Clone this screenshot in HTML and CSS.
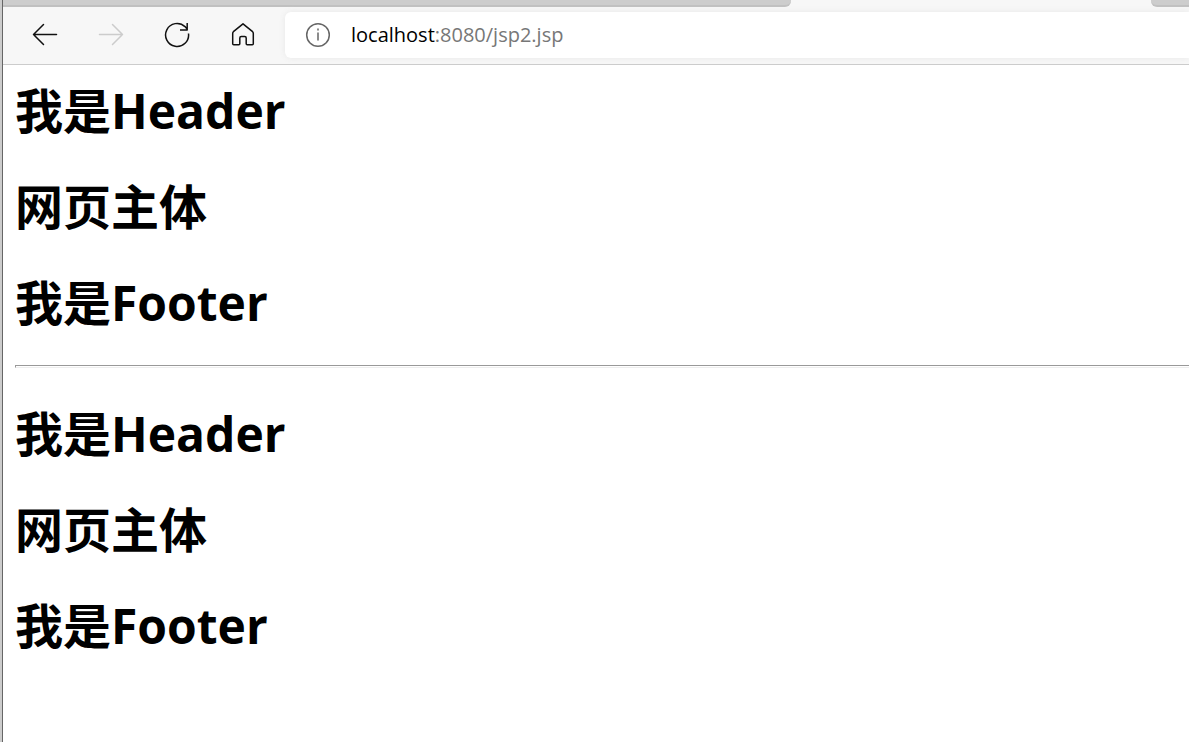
FILE: index.html
```html
<!DOCTYPE html>
<html lang="zh-CN">
<head>
<meta charset="utf-8">
<title>localhost:8080/jsp2.jsp</title>
<link rel="stylesheet" href="styles.css">
</head>
<body>
<div class="window">
  <div class="tabstrip">
    <div class="tabs-before"></div>
    <div class="tab-active"></div>
    <div class="tabs-after"></div>
  </div>
  <header class="toolbar">
    <nav class="nav">
      <button class="nav-button" type="button" aria-label="Back">
        <svg class="icon" viewBox="0 0 26 26"><path d="M24.500 12.500H1.500M11.500 2.500L1.500 12.500L11.500 22.500"/></svg>
      </button>
      <button class="nav-button" type="button" aria-label="Forward" disabled>
        <svg class="icon" viewBox="0 0 26 26"><path d="M1.500 12.500H24.500M14.500 2.500L24.500 12.500L14.500 22.500"/></svg>
      </button>
      <button class="nav-button" type="button" aria-label="Refresh">
        <svg class="icon" viewBox="0 0 26 26"><path stroke-linecap="butt" d="M24.500 11.500A11.500 11.500 0 1 1 21 4.600L23.500 7.500M23.200 1V8H16"/></svg>
      </button>
      <button class="nav-button" type="button" aria-label="Home">
        <svg class="icon" viewBox="0 0 26 26"><path d="M13 1.800L22.600 9.700Q23.300 10.400 23.300 11.500V21.700Q23.300 22.700 22.300 22.700H17.200Q16.200 22.700 16.200 21.700V16Q16.200 14.500 14.700 14.500H11.300Q9.800 14.500 9.800 16V21.700Q9.800 22.700 8.800 22.700H3.700Q2.700 22.700 2.700 21.700V11.500Q2.700 10.400 3.400 9.700Z"/></svg>
      </button>
    </nav>
    <div class="address">
      <button class="info" type="button" aria-label="Site information">
        <svg class="icon" viewBox="0 0 26 26"><circle cx="13" cy="13" r="11.300"/><path d="M13 11V18M13 7V8"/></svg>
      </button>
      <div class="url" role="textbox" aria-label="Address" contenteditable="true" spellcheck="false"><span class="host">localhost</span>:8080/jsp2.jsp</div>
    </div>
  </header>
  <main class="page">
    <h1>我是Header</h1>
    <h1>网页主体</h1>
    <h1>我是Footer</h1>
    <hr>
    <h1>我是Header</h1>
    <h1>网页主体</h1>
    <h1>我是Footer</h1>
  </main>
</div>
</body>
</html>
```

FILE: styles.css
```css
* {
  box-sizing: border-box;
}

body {
  margin: 0;
  background: #ccc;
  font-family: "Open Sans", "Noto Sans CJK SC", sans-serif;
}

.window {
  min-height: 100vh;
  margin-left: 2px;
  border-left: 1px solid #666;
  background: #fff;
  overflow: hidden;
}

.tabstrip {
  display: flex;
  height: 7px;
  background: #f7f7f7;
}

.tabs-before {
  flex: 788;
  border-bottom: 2px solid #c0c0c0;
  border-bottom-right-radius: 6px;
  background: #cdcdcd;
}

.tab-active {
  flex: 360;
}

.tabs-after {
  flex: 38;
  border-bottom: 2px solid #c0c0c0;
  border-bottom-left-radius: 6px;
  background: #cdcdcd;
}

.toolbar {
  display: flex;
  align-items: center;
  height: 58px;
  padding-bottom: 1px;
  border-bottom: 1px solid #ccc;
  background: #f7f7f7;
}

.nav {
  display: flex;
  padding: 0 9px;
}

.nav-button,
.info {
  display: flex;
  align-items: center;
  justify-content: center;
  padding: 0;
  border: 0;
  background: none;
  color: #111;
}

.nav-button {
  width: 66px;
  height: 46px;
}

.nav-button:disabled {
  color: #ccc;
}

.icon {
  width: 26px;
  height: 26px;
  fill: none;
  stroke: currentColor;
  stroke-width: 1.5;
  stroke-linecap: round;
  stroke-linejoin: round;
}

.address {
  display: flex;
  flex: 1;
  align-items: center;
  height: 46px;
  padding-left: 20px;
  border-radius: 6px 0 0 6px;
  background: #fff;
  box-shadow: 0 0 6px #e8e8e8;
}

.info {
  color: #666;
}

.url {
  flex: 1;
  padding-left: 20px;
  outline: 0;
  color: #777;
  font-size: 20px;
  line-height: 28px;
}

.host {
  color: #000;
}

.page {
  padding: 14px 0 14px 12px;
}

h1 {
  margin: 0 0 32px;
  color: #000;
  font-size: 48px;
  font-weight: 700;
  line-height: 64px;
}

hr {
  height: 3px;
  margin: -2px 0 34px;
  border: 1px solid #999;
  border-right: 0;
  border-bottom-color: #eee;
}
```
